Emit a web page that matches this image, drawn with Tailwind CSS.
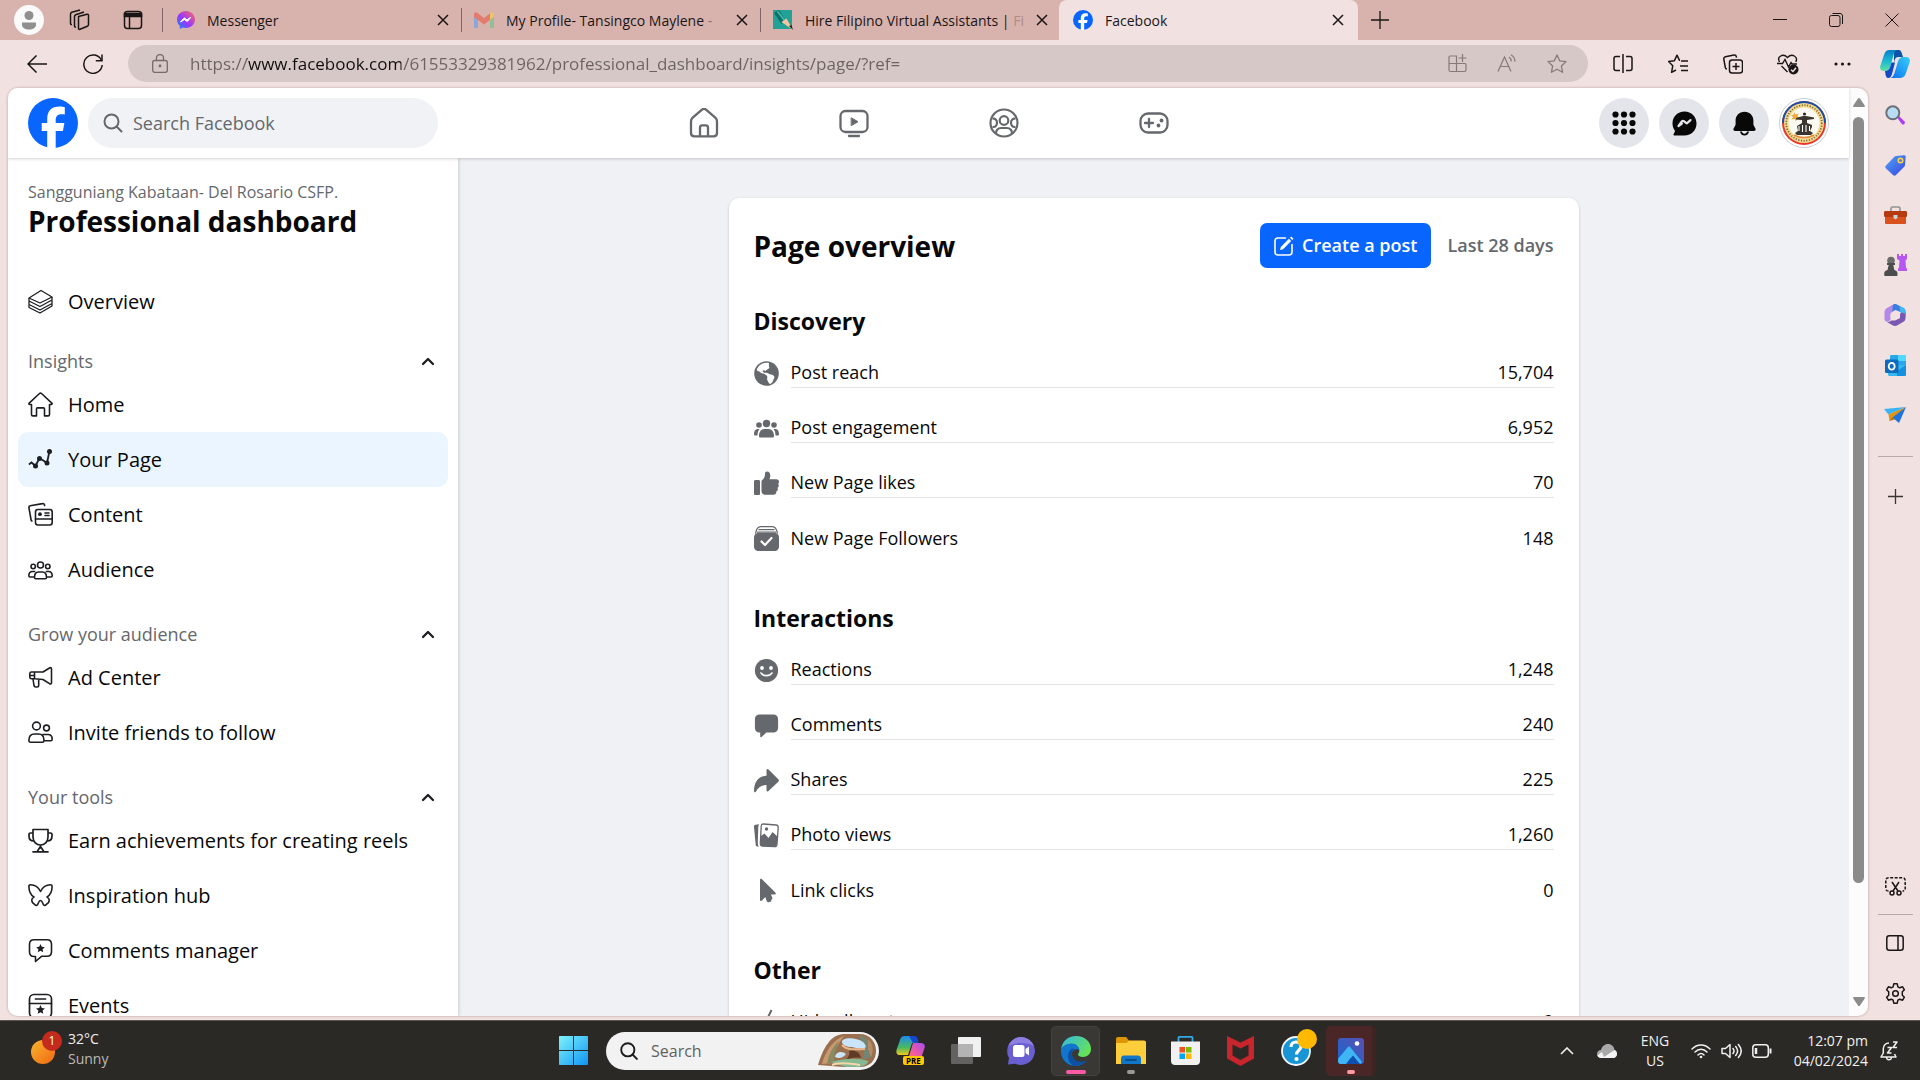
<!DOCTYPE html>
<html lang="en">
<head>
  <meta charset="UTF-8">
  <meta name="viewport" content="width=device-width, initial-scale=1.0">
  <title>Facebook</title>
  <script src="https://cdn.jsdelivr.net/npm/@tailwindcss/browser@4"></script>
</head>
<body class="h-screen flex flex-col overflow-hidden bg-[#f1e2e1] text-[#080809] font-['Open_Sans','Noto_Sans',sans-serif]">

  <!-- Tab strip -->
  <div class="h-10 shrink-0 flex items-center bg-[#d8b2ad] text-[14px] text-[#1b1616]">
    <button class="w-[54px] pl-1 flex justify-center" aria-label="Profile">
      <svg class="size-[30px]" viewBox="0 0 30 30"><circle cx="15" cy="15" r="15" fill="#fafafa"/><circle cx="15" cy="10.500" r="4.500" fill="#8f8f8f"/><path d="M8 17.500h14v2c0 3.500-3 5-7 5s-7-1.500-7-5z" fill="#8f8f8f"/></svg>
    </button>
    <button class="w-[50px] flex justify-center" aria-label="Workspaces">
      <svg class="size-[22px]" viewBox="0 0 22 22" fill="none" stroke="#1b1616" stroke-width="1.500" stroke-linejoin="round"><path d="M10.500 7.500 19 5.200c.8-.2 1.500.3 1.500 1.200v9c0 .9-.4 1.500-1.200 1.800L12 20.300c-.9.300-1.500-.2-1.500-1.100z"/><path d="M8 18c-1 .2-1.500-.3-1.500-1.200V7.500c0-.9.400-1.500 1.200-1.800L16 3"/><path d="M4 15.500c-1 .2-1.500-.3-1.500-1.200V5c0-.9.400-1.500 1.200-1.800L12 1"/></svg>
    </button>
    <button class="w-[58px] flex justify-center" aria-label="Tab actions">
      <svg class="size-5" viewBox="0 0 20 20" fill="none" stroke="#1b1616" stroke-width="1.500"><rect x="1.500" y="1.500" width="17" height="17" rx="3"/><path d="M1.500 3.500h17v3h-17z" fill="#1b1616"/><path d="M6.500 6v12"/></svg>
    </button>

    <div class="w-[299px] min-w-0 h-6 flex items-center gap-3 pl-[14px] pr-3 border-l border-[#7d6361]">
      <svg class="size-[18px] shrink-0" viewBox="0 0 18 18"><defs><linearGradient id="ms" x1="0" y1="1" x2="1" y2="0"><stop offset="0" stop-color="#0a8cff"/><stop offset=".45" stop-color="#9b36ff"/><stop offset="1" stop-color="#ff6b5a"/></linearGradient></defs><path d="M9 0C4 0 0 3.700 0 8.500 0 11 1 13.200 2.800 14.700V18l3-1.500c1 .3 2 .5 3.200.5 5 0 9-3.700 9-8.500S14 0 9 0z" fill="url(#ms)"/><path d="M3.500 11 7.200 6.800l2.700 2 3.900-2.500-3.500 4.300-2.900-2z" fill="#fff" stroke="#fff" stroke-linejoin="round"/></svg>
      <span class="flex-1 truncate">Messenger</span>
      <button aria-label="Close tab"><svg class="size-3" viewBox="0 0 12 12" stroke="#1b1616" stroke-width="1.500"><path d="m1 1 10 10M11 1 1 11"/></svg></button>
    </div>
    <div class="w-[299px] min-w-0 h-6 flex items-center gap-3 pl-3 pr-3 border-l border-[#7d6361]">
      <svg class="w-5 h-4 shrink-0" viewBox="0 0 20 16"><path d="M0 2v12.500c0 .8.600 1.500 1.500 1.500H4V6z" fill="#8ba6d8"/><path d="M20 2v12.500c0 .8-.6 1.500-1.500 1.500H16V6z" fill="#93bd94"/><path d="M16 2.500V8l4-3V2.500C20 .5 18-.5 16.500 1z" fill="#edc466"/><path d="M0 5V2.500C0 .5 2-.5 3.500 1L10 6l6-4.500V8l-6 4.500L4 8z" fill="#e37b6f"/></svg>
      <span class="flex-1 whitespace-nowrap">My Profile- Tansingco Maylene <span class="text-[#8c706d]">-</span></span>
      <button aria-label="Close tab"><svg class="size-3" viewBox="0 0 12 12" stroke="#1b1616" stroke-width="1.500"><path d="m1 1 10 10M11 1 1 11"/></svg></button>
    </div>
    <div class="w-[299px] min-w-0 h-6 flex items-center gap-3 pl-3 pr-3 border-l border-[#7d6361]">
      <svg class="size-5 shrink-0" viewBox="0 0 20 20"><path d="M0 0h19v19H0z" fill="#22a196"/><path d="m6 0 5.500 9L8.500 14 1 3z" fill="#0b6e68"/><path d="M4.500 1.500 12 11" stroke="#3cb5aa" stroke-width="2"/><path d="m8.500 12 5-3.500L20 20z" fill="#f4c49c"/><path d="m16 16 4 4-1.500-5z" fill="#222"/></svg>
      <span class="flex-1 whitespace-nowrap">Hire Filipino Virtual Assistants | <span class="text-[#b08b88]">Fi</span></span>
      <button aria-label="Close tab"><svg class="size-3" viewBox="0 0 12 12" stroke="#1b1616" stroke-width="1.500"><path d="m1 1 10 10M11 1 1 11"/></svg></button>
    </div>
    <div class="w-[299px] min-w-0 h-10 flex items-center gap-3 px-[14px] rounded-t-[8px] bg-[#f1e2e1]">
      <svg class="size-5 shrink-0" viewBox="0 0 50 50"><circle cx="25" cy="25" r="25" fill="#0866ff"/><path d="M19.500 50V32.500h-6V25h6v-4c0-9 4-13 12.500-13 1.800 0 4 .3 5 .6v7.200c-.8-.1-2-.1-3.200-.1-4.300 0-5.800 1.600-5.800 5.800V25h8.500l-1.500 7.500h-7V50z" fill="#fff"/></svg>
      <span class="flex-1 truncate">Facebook</span>
      <button aria-label="Close tab"><svg class="size-3" viewBox="0 0 12 12" stroke="#1b1616" stroke-width="1.500"><path d="m1 1 10 10M11 1 1 11"/></svg></button>
    </div>
    <button class="w-11 flex justify-center" aria-label="New tab"><svg class="size-[18px]" viewBox="0 0 18 18" stroke="#1b1616" stroke-width="1.300"><path d="M9 0v18M0 9h18"/></svg></button>
    <div class="ml-auto flex">
      <button class="w-14 flex justify-center" aria-label="Minimize"><svg class="size-[14px]" viewBox="0 0 14 14" stroke="#1b1616"><path d="M0 6.500h14"/></svg></button>
      <button class="w-14 flex justify-center" aria-label="Restore"><svg class="size-[14px]" viewBox="0 0 14 14" fill="none" stroke="#1b1616"><rect x=".5" y="2.500" width="10.500" height="11" rx="2"/><path d="M3.500.5H11c1.500 0 2.500 1 2.500 2.500v8"/></svg></button>
      <button class="w-14 flex justify-center" aria-label="Close"><svg class="size-[14px]" viewBox="0 0 14 14" stroke="#1b1616"><path d="m.5.5 13 13M13.500.5l-13 13"/></svg></button>
    </div>
  </div>

  <!-- Toolbar -->
  <div class="h-12 shrink-0 flex items-center pb-px">
    <button class="w-[74px] flex justify-center" aria-label="Back"><svg class="w-5 h-[18px]" viewBox="0 0 20 18" fill="none" stroke="#1b1616" stroke-width="1.500"><path d="M20 9H1M9.500.5 1 9l8.500 8.500"/></svg></button>
    <button class="w-[38px] mr-4 flex justify-center" aria-label="Refresh"><svg class="size-5" viewBox="0 0 20 20" fill="none" stroke="#1b1616" stroke-width="1.500"><path d="M18.500 6.500A9.200 9.200 0 1 0 19.200 11"/><path d="M19 .5v6.200h-6.200"/></svg></button>
    <div class="flex-1 min-w-0 h-[37px] flex items-center rounded-full bg-[#d6c8c7] pl-6 pr-[6px]">
      <svg class="w-4 h-[19px] shrink-0" viewBox="0 0 16 19" fill="none" stroke="#766b6a" stroke-width="1.300"><rect x=".7" y="6.500" width="14.600" height="11.800" rx="2"/><path d="M4.500 6.500V4a3.500 3.500 0 0 1 7 0v2.500"/><circle cx="8" cy="12" r=".8" fill="#766b6a"/></svg>
      <input type="text" aria-label="Address" value="https://www.facebook.com/61553329381962/professional_dashboard/insights/page/?ref=" class="ml-[22px] flex-1 min-w-0 outline-none text-[17px] text-transparent bg-clip-text bg-[linear-gradient(90deg,#6b6261_57px,#120e0e_57px,#120e0e_211px,#6b6261_211px)]">
      <button class="w-[50px] flex justify-center" aria-label="App available"><svg class="size-[19px]" viewBox="0 0 19 19" fill="none" stroke="#857a79" stroke-width="1.200"><path d="M2 2h6.500v15.500H2.500c-1 0-1.500-.5-1.500-1.500V3.500C1 2.500 1.500 2 2 2zM1 9.500h16c.5 0 1 .5 1 1V16c0 1-.5 1.500-1.500 1.500H8.500M14.500 0v8M10.500 4h8"/></svg></button>
      <button class="w-[50px] flex justify-center" aria-label="Read aloud"><svg class="size-5" viewBox="0 0 20 20" fill="none" stroke="#857a79" stroke-width="1.200"><path d="M1 17.500 7.500 3 14 17.500M3.500 12.500h8M12 3c1.500 1 2.200 2.500 2.200 4.500M14 .8c2.500 1.500 4 4 4 7"/></svg></button>
      <button class="w-[50px] flex justify-center" aria-label="Add to favorites"><svg class="size-5" viewBox="0 0 20 20" fill="none" stroke="#857a79" stroke-width="1.300" stroke-linejoin="round"><path d="m10 1 2.700 5.800 6.300.8-4.600 4.400 1.200 6.300L10 15.200l-5.600 3.100L5.600 12 1 7.600l6.300-.8z"/></svg></button>
    </div>
    <div class="ml-[7px] flex shrink-0">
      <button class="w-[55px] flex justify-center items-center" aria-label="Split screen"><svg class="w-5 h-[19px]" viewBox="0 0 20 19" fill="none" stroke="#1b1616" stroke-width="1.500"><path d="M7 2.500H3c-1.200 0-2 .8-2 2v10c0 1.200.8 2 2 2h4M13 2.500h4c1.200 0 2 .8 2 2v10c0 1.200-.8 2-2 2h-4M10 0v19"/></svg></button>
      <button class="w-[55px] flex justify-center items-center" aria-label="Favorites"><svg class="size-5" viewBox="0 0 20 20" fill="none" stroke="#1b1616" stroke-width="1.500" stroke-linejoin="round"><path d="M12 6.300h-.5L9 1.200 6.300 6.800l-5.800.7 4.300 4.200-1.200 6.600L8 16M13 7h7M12 12h8M13 16.500h7"/></svg></button>
      <button class="w-[55px] flex justify-center items-center" aria-label="Collections"><svg class="size-5" viewBox="0 0 20 20" fill="none" stroke="#1b1616" stroke-width="1.500"><rect x="6.500" y="6" width="13" height="13" rx="2.500"/><path d="M13 9v7M9.500 12.500h7M4 15c-1 0-1.500-.5-1.700-1.500L.8 5C.6 3.800 1.200 3 2.400 2.700L11 1c1.200-.2 2 .3 2.300 1.500l.2 1.200"/></svg></button>
      <button class="w-[55px] flex justify-center items-center" aria-label="Browser essentials"><svg class="size-[22px]" viewBox="0 0 22 22" fill="none" stroke="#1b1616" stroke-width="1.400"><path d="M2.500 9C-.5 3.500 6 0 10.500 4.500 15 0 21.500 3.500 18.800 9M0 10.500h5.500L8 6.500l3.500 7.500L14 9.500l1 1.500h5M4.500 13l6 6"/><circle cx="16.500" cy="16.500" r="5" fill="#1b1616" stroke="none"/><path d="m14 16.700 2 1.800 3-3.800" stroke="#f1e2e1"/></svg></button>
      <button class="w-[55px] flex justify-center items-center" aria-label="Settings and more"><svg class="w-[17px] h-1" viewBox="0 0 17 4" fill="#1b1616"><circle cx="2" cy="2" r="1.600"/><circle cx="8.500" cy="2" r="1.600"/><circle cx="15" cy="2" r="1.600"/></svg></button>
      <button class="w-[50px] flex justify-center items-center" aria-label="Copilot"><svg class="w-[30px] h-7" viewBox="0 0 30 28"><defs><linearGradient id="cp1" x1="0" y1="0" x2="0" y2="1"><stop offset="0" stop-color="#0b7fc8"/><stop offset=".5" stop-color="#19b6d4"/><stop offset="1" stop-color="#5de1a0"/></linearGradient><linearGradient id="cp2" x1="1" y1="0" x2="0" y2="1"><stop offset="0" stop-color="#35d0fb"/><stop offset="1" stop-color="#0c6ff0"/></linearGradient></defs><path d="M14 0h5c2.500 0 3 4 4 7h-5c-2.500 0-3.500 3-4 6z" fill="#0b55a8"/><path d="M23 7h3c3 0 4.500 2 3.700 5L26 23c-1 3.500-3 5-6.500 5H9c3 0 4.500-2 5.500-5l3-10c1-3.500 2.500-6 5.500-6z" fill="url(#cp2)"/><path d="M9.500 0h8c-2 0-3 1.500-4 5l-3 11c-1 3.500-2.500 5-5.500 5H4c-3 0-4.500-2-3.700-5L4 5C5 1.500 6.500 0 9.500 0z" fill="url(#cp1)"/><path d="M5 21c3 0 4.500-1.500 5.500-5l1-3.500h3.500L12.500 22c-1 4-2 6-4.500 6-2 0-2.500-3-3-7z" fill="#1247c8"/></svg></button>
    </div>
  </div>

  <div class="flex-1 min-h-0 flex">

    <!-- Page -->
    <div class="flex-1 min-w-0 ml-2 mb-1 flex rounded-[10px] overflow-hidden bg-[#fcfcfc] shadow-[0_0_3px_#b79c9a]">
      <div class="flex-1 min-w-0 flex flex-col bg-[#f0f1f5]">

        <header class="relative z-10 h-[70px] shrink-0 grid grid-cols-[1fr_auto_1fr] items-center px-5 bg-white shadow-[0_1px_3px_#0000002e]">
          <div class="flex items-center gap-[10px]">
            <a href="#" aria-label="Facebook"><svg class="size-[50px]" viewBox="0 0 50 50"><circle cx="25" cy="25" r="25" fill="#0866ff"/><path d="M19.200 50V33h-5.500v-8h5.500v-3.500c0-8.800 4-12.900 12.600-12.900 1.700 0 4 .3 5 .6v7.200c-.6-.1-1.500-.1-2.800-.1-4.500 0-6.300 1.700-6.300 6.100V25h8.700l-1.500 8h-7.200v17z" fill="#fff"/></svg></a>
            <label class="w-[350px] h-[50px] flex items-center gap-[10px] pl-[15px] rounded-full bg-[#f0f2f5]">
              <svg class="size-5 shrink-0" viewBox="0 0 20 20" fill="none" stroke="#65686c" stroke-width="2"><circle cx="8.500" cy="8.500" r="7"/><path d="m13.500 13.500 5 5" stroke-linecap="round"/></svg>
              <input type="search" aria-label="Search Facebook" placeholder="Search Facebook" class="w-full outline-none text-[18px] placeholder:text-[#65686c]">
            </label>
          </div>
          <nav class="flex">
            <a href="#" class="w-[150px] flex justify-center" aria-label="Home"><svg class="size-[30px]" viewBox="0 0 30 30" fill="none" stroke="#65686c" stroke-width="2.300" stroke-linejoin="round"><path d="M2 13.500c0-1.500.6-2.800 1.700-3.800l9-7.900c1.400-1.200 3.200-1.200 4.600 0l9 7.900c1.100 1 1.700 2.300 1.700 3.800V25c0 2-1.300 3.300-3.300 3.300H5.300C3.300 28.300 2 27 2 25z"/><path d="M11 28v-8.500c0-1.500.8-2.200 2.200-2.200h3.600c1.400 0 2.200.7 2.200 2.200V28"/></svg></a>
            <a href="#" class="w-[150px] flex justify-center" aria-label="Video"><svg class="size-[30px]" viewBox="0 0 30 30" fill="none" stroke="#65686c" stroke-width="2.300" stroke-linecap="round"><rect x="1.500" y="3" width="27" height="21" rx="5"/><path d="M10 28h10"/><path d="m12.500 10 6.500 3.700-6.500 3.800z" fill="#65686c" stroke-width="1" stroke-linejoin="round"/></svg></a>
            <a href="#" class="w-[150px] flex justify-center" aria-label="Groups"><svg class="size-[30px]" viewBox="0 0 30 30" fill="none" stroke="#65686c" stroke-width="2.200"><circle cx="15" cy="15" r="13.500"/><circle cx="15" cy="12.500" r="4.300"/><path d="M7 26c-.5-3.500 2-6 5-6h6c3 0 5.500 2.500 5 6M3.500 10.800c2.500-.8 4.500 1.200 4.500 4s-2 4.800-4.500 4M26.500 10.800c-2.500-.8-4.500 1.200-4.500 4s2 4.800 4.500 4"/></svg></a>
            <a href="#" class="w-[150px] flex justify-center" aria-label="Gaming"><svg class="size-[30px]" viewBox="0 0 30 30" fill="none" stroke="#65686c" stroke-width="2.300" stroke-linecap="round"><rect x="1.500" y="5.500" width="27" height="19" rx="7.500"/><path d="M10 11v8M6 15h8"/><circle cx="22.500" cy="12.500" r=".8" fill="#65686c"/><circle cx="19.500" cy="17.500" r=".8" fill="#65686c"/></svg></a>
          </nav>
          <div class="flex justify-end gap-[10px]">
            <button class="size-[50px] rounded-full bg-[#e4e5ea] flex items-center justify-center" aria-label="Menu"><svg class="size-6" viewBox="0 0 24 24" fill="#080809"><circle cx="3.500" cy="3.500" r="3.100"/><circle cx="12" cy="3.500" r="3.100"/><circle cx="20.500" cy="3.500" r="3.100"/><circle cx="3.500" cy="12" r="3.100"/><circle cx="12" cy="12" r="3.100"/><circle cx="20.500" cy="12" r="3.100"/><circle cx="3.500" cy="20.500" r="3.100"/><circle cx="12" cy="20.500" r="3.100"/><circle cx="20.500" cy="20.500" r="3.100"/></svg></button>
            <button class="size-[50px] rounded-full bg-[#e4e5ea] flex items-center justify-center" aria-label="Messenger"><svg class="size-[25px]" viewBox="0 0 25 25"><path d="M12.500.5C5.500.5.5 5.600.5 12.500c0 2.700.8 5.200 2.300 7.100.2.400.2.800 0 1.200l-1.300 2.500c-.3.600.1 1.200.8 1.200h10.200c7 0 12-5.100 12-12S19.500.5 12.500.5z" fill="#080809"/><path d="m6.500 15 3.300-4.500c.6-.7 1.400-.8 2-.3l2.500 2c.3.200.6.200.8-.1l3.400-3M6.500 15l3.400-2.500" fill="none" stroke="#e4e5ea" stroke-width="2.200" stroke-linecap="round" stroke-linejoin="round"/></svg></button>
            <button class="size-[50px] rounded-full bg-[#e4e5ea] flex items-center justify-center" aria-label="Notifications"><svg class="size-[25px]" viewBox="0 0 25 25" fill="#080809"><path d="M12.500.8C7.300.8 3.600 4.800 3.600 9.500v3.600c0 .6-.2 1.200-.6 1.800l-1.300 2.300c-.9 1.500 0 2.700 1.600 2.700h18.400c1.600 0 2.500-1.200 1.600-2.700L22 14.900c-.4-.6-.6-1.200-.6-1.800V9.500c0-4.700-3.700-8.700-8.900-8.700z"/><path d="M8 20.500h2c.2 1.300 1.200 2.200 2.500 2.200s2.300-.9 2.500-2.200h2c-.2 2.300-2.200 4.100-4.500 4.100S8.200 22.800 8 20.500z"/></svg></button>
            <button class="size-[50px]" aria-label="Account"><svg class="size-[50px]" viewBox="0 0 50 50"><circle cx="25" cy="25" r="24.500" fill="#fff" stroke="#c9ccd1"/><circle cx="25" cy="25" r="22" fill="#e6392c"/><path d="M3 25a22 22 0 0 1 44 0z" fill="#1c4ea3"/><circle cx="25" cy="25" r="20" fill="#f6d98a"/><circle cx="25" cy="25" r="17.800" fill="none" stroke="#7a6a45" stroke-width="1.800" stroke-dasharray="1.200 1.500"/><circle cx="25" cy="25" r="15.500" fill="#fbfaf2"/><path d="m15 14 1.500 2.500 3-1-1 3 2.500 1.500-3 .5-1 3-1.500-2.500-3 .5 1.500-2.500-2-2 2.500-.3z" fill="#f2a93b"/><circle cx="25.500" cy="16" r="1.600" fill="#2c2824"/><path d="m17 20 7-2h3l8 1.500v1.500l-7 1v3l5 2v2l-2 4 3 2-2 2H18l-2-2 3-2-1-5 5-3v-3l-6-.5z" fill="#3b352f"/><path d="M20 28v5M23.500 27v7M27 27v7M30.500 28v5" stroke="#fff" stroke-width="1.100"/><path d="M15 37c6.500 3.500 13.500 3.500 20 0" fill="none" stroke="#e08a3a" stroke-width="1.800"/></svg></button>
          </div>
        </header>

        <div class="flex-1 min-h-0 flex">

          <!-- Left menu -->
          <aside class="w-[450px] shrink-0 overflow-hidden bg-white px-[10px] pt-6 shadow-[1px_0_3px_#00000026] text-[20px] font-medium">
            <p class="px-[10px] text-[16px] leading-5 font-normal text-[#65686c]">Sangguniang Kabataan- Del Rosario CSFP.</p>
            <h1 class="px-[10px] mb-[34px] text-[28px] leading-[38px] font-bold">Professional dashboard</h1>

            <a href="#" class="h-[55px] px-[10px] flex items-center gap-[15px]">
              <svg class="size-[25px]" viewBox="0 0 25 25" fill="none" stroke="#1c1e21" stroke-width="1.300" stroke-linejoin="round"><path d="M13 1.500 24 8l-12 6L1 9z"/><path d="M24 8v3l-12 6.500L1 12V9M24 11.500v3L12 21 1 15.500V12.500M24 15v2L12 24 1 18.500V16"/></svg>
              Overview
            </a>

            <button class="mt-4 w-full h-8 pl-[10px] pr-[13px] flex items-center justify-between text-[18px] text-[#65686c]">Insights
              <svg class="w-[14px] h-[9px]" viewBox="0 0 14 9" fill="none" stroke="#1c1e21" stroke-width="2.300" stroke-linecap="round" stroke-linejoin="round"><path d="m2 7 5-5 5 5"/></svg>
            </button>
            <a href="#" class="h-[55px] px-[10px] flex items-center gap-[15px]">
              <svg class="size-[25px]" viewBox="0 0 25 25" fill="none" stroke="#1c1e21" stroke-width="1.600" stroke-linejoin="round" stroke-linecap="round"><path d="M3.500 12.500H1.800c-.9 0-1.200-.8-.6-1.400L11.500 1.500c.6-.5 1.400-.5 2 0l10.300 9.600c.6.600.3 1.400-.6 1.400h-1.700v10c0 .9-.5 1.400-1.400 1.400h-3.600v-7c0-.6-.4-1-1-1H9.500c-.6 0-1 .4-1 1v7H4.900c-.9 0-1.400-.5-1.400-1.400z"/></svg>
              Home
            </a>
            <a href="#" class="h-[55px] px-[10px] flex items-center gap-[15px] rounded-[10px] bg-[#ebf5ff]">
              <svg class="size-[25px]" viewBox="0 0 25 25" fill="none" stroke="#1c1e21" stroke-width="1.800" stroke-linecap="round"><path d="m1.500 17 2-1.500 4 3.500 4-8 7.500 5 2.500-12"/><g fill="#1c1e21" stroke="none"><circle cx="7.500" cy="19" r="2.500"/><circle cx="11.500" cy="11.500" r="2.500"/><circle cx="19" cy="16" r="2.500"/><circle cx="21.500" cy="4.500" r="2.500"/></g></svg>
              Your Page
            </a>
            <a href="#" class="h-[55px] px-[10px] flex items-center gap-[15px]">
              <svg class="size-[25px]" viewBox="0 0 25 25" fill="none" stroke="#1c1e21" stroke-width="1.600" stroke-linecap="round"><rect x="7.500" y="7.500" width="16.700" height="15.500" rx="2.500"/><path d="M7.500 17h16.500M17 11h4M17 13.500h4M4 19c-.5 0-.8-.4-.9-1L.9 5.500c-.1-.9.400-1.600 1.300-1.800L14.500 1.600c1-.2 1.700.3 1.900 1.200l.2.700"/><circle cx="12" cy="12.200" r="1.900" fill="#1c1e21" stroke="none"/></svg>
              Content
            </a>
            <a href="#" class="h-[55px] px-[10px] flex items-center gap-[15px]">
              <svg class="size-[25px]" viewBox="0 0 25 25" fill="none" stroke="#1c1e21" stroke-width="1.600" stroke-linejoin="round"><circle cx="12.500" cy="8" r="3"/><circle cx="5.200" cy="9.500" r="2.200"/><circle cx="19.800" cy="9.500" r="2.200"/><path d="M6.500 20.500c0-3.500 1.500-5.500 4-5.500h4c2.500 0 4 2 4 5.500 0 .8-.5 1.300-1.300 1.300H7.800c-.8 0-1.300-.5-1.300-1.300zM6.500 20H2c-.7 0-1.200-.4-1.200-1.200 0-2.700 1.200-4.300 3.500-4.300h3M18.500 20H23c.7 0 1.200-.4 1.200-1.200 0-2.700-1.200-4.300-3.500-4.300h-3"/></svg>
              Audience
            </a>

            <button class="mt-[21px] w-full h-8 pl-[10px] pr-[13px] flex items-center justify-between text-[18px] text-[#65686c]">Grow your audience
              <svg class="w-[14px] h-[9px]" viewBox="0 0 14 9" fill="none" stroke="#1c1e21" stroke-width="2.300" stroke-linecap="round" stroke-linejoin="round"><path d="m2 7 5-5 5 5"/></svg>
            </button>
            <a href="#" class="h-[55px] px-[10px] flex items-center gap-[15px]">
              <svg class="size-[25px]" viewBox="0 0 25 25" fill="none" stroke="#1c1e21" stroke-width="1.600" stroke-linejoin="round"><path d="M6.500 7H3.500C2.300 7 1.800 7.500 1.800 8.500v3.800c0 1 .5 1.500 1.700 1.500h3L15 14.500l6.500 4.200c1.200.7 2 .2 2-1V4c0-1.200-.8-1.700-2-1L15 7zM6.500 7v6.800M1.500 10.500h5M5 14l1 6.500c.2 1 .7 1.500 1.700 1.500H9c1.200 0 1.700-.6 1.700-1.700V14"/></svg>
              Ad Center
            </a>
            <a href="#" class="h-[55px] px-[10px] flex items-center gap-[15px]">
              <svg class="size-[25px]" viewBox="0 0 25 25" fill="none" stroke="#1c1e21" stroke-width="1.600" stroke-linejoin="round"><circle cx="8.500" cy="6" r="3.900"/><circle cx="18.500" cy="8" r="2.900"/><path d="M.9 20.500c0-4 2-6.500 5.600-6.500h4c3.500 0 5.500 2.500 5.500 6.500 0 1-.6 1.700-1.600 1.700H2.500c-1 0-1.600-.7-1.600-1.700zM14.500 14.500h5.500c2.800 0 4.200 2 4.200 4.700 0 1-.5 1.500-1.400 1.500H16"/></svg>
              Invite friends to follow
            </a>

            <button class="mt-[21px] w-full h-8 pl-[10px] pr-[13px] flex items-center justify-between text-[18px] text-[#65686c]">Your tools
              <svg class="w-[14px] h-[9px]" viewBox="0 0 14 9" fill="none" stroke="#1c1e21" stroke-width="2.300" stroke-linecap="round" stroke-linejoin="round"><path d="m2 7 5-5 5 5"/></svg>
            </button>
            <a href="#" class="h-[55px] px-[10px] flex items-center gap-[15px]">
              <svg class="size-[25px]" viewBox="0 0 25 25" fill="none" stroke="#1c1e21" stroke-width="1.700" stroke-linejoin="round"><path d="M5 1.500h15V9c0 5-3.500 8-7.500 8S5 14 5 9zM5 5H2.500C1.500 5 1 5.500 1 6.300V8c0 3 2 5 4.800 5M20 5h2.500c1 0 1.500.5 1.500 1.300V8c0 3-2 5-4.800 5M12.500 17v3M12.500 18.500l-3 4.500M12.500 18.500l3 4.500M5 23.800h15" stroke-linecap="round"/></svg>
              Earn achievements for creating reels
            </a>
            <a href="#" class="h-[55px] px-[10px] flex items-center gap-[15px]">
              <svg class="size-[25px]" viewBox="0 0 25 25" fill="none" stroke="#1c1e21" stroke-width="1.600" stroke-linejoin="round"><path d="M12.500 8.500C10 3.500 5.500 1.800 2.500 1.800 1.400 1.800.9 2.300.9 3.300.9 8.500 2.500 12 6 14c-2.300 1-2.800 3.500-1.500 5.500.8 1.200 2 1.500 2.500 2.300.6.800 1.800.8 2.500 0 .8-1 1.300-4.300 3-4.300s2.200 3.300 3 4.300c.7.800 1.900.8 2.500 0 .5-.8 1.700-1.100 2.500-2.300 1.300-2 .8-4.500-1.500-5.500 3.500-2 5.100-5.500 5.100-10.700 0-1-.5-1.500-1.600-1.500-3 0-7.500 1.700-10 6.700z"/></svg>
              Inspiration hub
            </a>
            <a href="#" class="h-[55px] px-[10px] flex items-center gap-[15px]">
              <svg class="size-[25px]" viewBox="0 0 25 25" fill="none" stroke="#1c1e21" stroke-width="1.600" stroke-linejoin="round"><path d="M6 1.800h13c3 0 4.500 1.500 4.500 4.500v7.500c0 3-1.500 4.500-4.500 4.500h-5.500L7.500 23.500v-5H6c-3 0-4.500-1.500-4.500-4.700V6.300c0-3 1.500-4.500 4.500-4.500z"/><path d="m12.500 6 1.300 2.800 3 .4-2.200 2.100.6 3-2.700-1.500-2.700 1.500.6-3-2.200-2.100 3-.4z" fill="#1c1e21" stroke="none"/></svg>
              Comments manager
            </a>
            <a href="#" class="h-[55px] px-[10px] flex items-center gap-[15px]">
              <svg class="size-[25px]" viewBox="0 0 25 25" fill="none" stroke="#1c1e21" stroke-width="1.700" stroke-linecap="round"><rect x="1.500" y="1.500" width="22" height="23" rx="4.500"/><path d="M1.500 10.500h22M7.500 6h10"/><path d="m12.500 12 1.300 3 3.200.4-2.400 2.200.7 3.200-2.800-1.600-2.800 1.600.7-3.200L8 15.400l3.200-.4z" fill="#1c1e21" stroke="none"/></svg>
              Events
            </a>
          </aside>

          <!-- Page overview card -->
          <main class="flex-1 min-w-0 overflow-hidden pt-10">
            <section class="max-w-[850px] h-[1000px] mx-auto p-[25px] bg-white rounded-[10px] shadow-[0_1px_3px_#00000033]">
              <div class="flex items-center">
                <h2 class="flex-1 text-[28px] leading-9 font-bold">Page overview</h2>
                <button class="h-[45px] px-[14px] flex items-center gap-2 rounded-[7px] bg-[#0866ff] text-white text-[18px] font-semibold">
                  <svg class="size-5" viewBox="0 0 20 20" fill="none" stroke="#fff" stroke-width="1.600" stroke-linecap="round"><path d="M11.500 2H4C2 2 1 3 1 5v11c0 2 1 3 3 3h11c2 0 3-1 3-3V8.500"/><path d="m6 14 .8-3L15 2.800 17.200 5 9 13.200z" fill="#fff" stroke="none"/><path d="m17.300.5 2.200 2.200-1.200 1.300L16 1.800z" fill="#fff" stroke="none"/></svg>
                  Create a post
                </button>
                <span class="ml-4 text-[18px] font-semibold text-[#65686c]">Last 28 days</span>
              </div>

              <h3 class="mt-[38px] text-[23px] leading-[30px] font-bold">Discovery</h3>
              <ul class="mt-[22px] space-y-[25px] text-[18px] font-medium">
                <li class="flex items-center gap-3">
                  <svg class="size-[25px]" viewBox="0 0 25 25"><circle cx="12.500" cy="12.500" r="12.300" fill="#65686c"/><path d="M15 2c-2-.6-5-.3-7.500 1C5 4.500 3 7 2.700 9c1 1.500 2.500 1 3.300 2 1 1.300 2.500 1.500 4 1.500.8 1.500 2.300 1.300 3 2.500.8 1.500-.5 3 .5 4.500s.8 2.500 2.500 3.500c2-1 3-2.500 3.300-4.300 1-1.200 1.500-2.500.7-3.700-1.500-2-4-1-5.500-2.500-1-1-3-1-4-.5-.5-1-1.800-.8-2-2 .5-1 2-.8 3 0 1-2 3.500-1.500 4-3.500C14.500 5.500 15 4 15 2z" fill="#fff"/></svg>
                  <div class="flex-1 h-[30px] flex items-center justify-between border-b border-[#e2e4e8]"><span>Post reach</span><span class="font-normal">15,704</span></div>
                </li>
                <li class="flex items-center gap-3">
                  <svg class="size-[25px]" viewBox="0 0 25 25" fill="#65686c"><circle cx="12.500" cy="7.500" r="3.700"/><circle cx="5" cy="9" r="2.800"/><circle cx="20" cy="9" r="2.800"/><path d="M5 20c0-4 2-7 5.500-7h4c3.500 0 5.500 3 5.500 7 0 1-.6 1.500-1.500 1.500h-12C5.600 21.500 5 21 5 20zM0 18c0-3 1.300-4.500 3.300-5h2.200C4 15 3.500 17 3.500 19.500H1.300C.5 19.500 0 19 0 18zM25 18c0-3-1.300-4.500-3.300-5h-2.200c1.500 2 2 4 2 6.500h2.200c.8 0 1.300-.5 1.300-1.500z"/></svg>
                  <div class="flex-1 h-[30px] flex items-center justify-between border-b border-[#e2e4e8]"><span>Post engagement</span><span class="font-normal">6,952</span></div>
                </li>
                <li class="flex items-center gap-3">
                  <svg class="size-[25px]" viewBox="0 0 25 25" fill="#65686c"><path d="M1.500 9h3C5.500 9 6 9.500 6 10.500v12c0 1-.5 1.500-1.500 1.500h-3C.5 24 0 23.500 0 22.500v-12C0 9.500.5 9 1.500 9zM7.500 11c0-1 .3-1.600 1-2.200C10.500 7 11 5 11 2.500 11 1.200 11.800.5 13 .5c2.300 0 3.300 2 3.300 4 0 1.500-.3 2.500-.8 3.700h6.800c1.700 0 2.700 1 2.700 2.500 0 1-.3 1.500-.8 2 .5.600.6 1.200.6 1.800 0 1.200-.6 2-1.300 2.500.3.500.4 1 .3 1.500-.1 1-.8 1.700-1.600 2 .4 2-.7 3.200-2.700 3.200h-8c-2.500 0-4-1.500-4-4z"/></svg>
                  <div class="flex-1 h-[30px] flex items-center justify-between border-b border-[#e2e4e8]"><span>New Page likes</span><span class="font-normal">70</span></div>
                </li>
                <li class="flex items-center gap-3">
                  <svg class="size-[25px]" viewBox="0 0 25 25"><path d="M5 7h15c3.500 0 5 1.500 5 5v8c0 3.500-1.500 5-5 5H5c-3.500 0-5-1.500-5-5v-8c0-3.500 1.500-5 5-5z" fill="#65686c"/><path d="M1.500 7.500C2.500 2.500 4.500.7 6.500.7h12c2 0 4 1.800 5 6.800M4.500 3.700h16M3 6.200h19" fill="none" stroke="#65686c" stroke-width="1.300"/><path d="m7.500 15.500 3.500 3.500 6.500-7" fill="none" stroke="#fff" stroke-width="2.200" stroke-linecap="round" stroke-linejoin="round"/></svg>
                  <div class="flex-1 h-[30px] flex items-center justify-between"><span>New Page Followers</span><span class="font-normal">148</span></div>
                </li>
              </ul>

              <h3 class="mt-[50px] text-[23px] leading-[30px] font-bold">Interactions</h3>
              <ul class="mt-[22px] space-y-[25px] text-[18px] font-medium">
                <li class="flex items-center gap-3">
                  <svg class="size-[25px]" viewBox="0 0 25 25"><circle cx="12.500" cy="12.500" r="11.600" fill="#65686c"/><circle cx="8" cy="10" r="1.900" fill="#fff"/><circle cx="17" cy="10" r="1.900" fill="#fff"/><path d="M7 15c2.500 3.500 8.500 3.500 11 0" fill="none" stroke="#fff" stroke-width="1.600" stroke-linecap="round"/></svg>
                  <div class="flex-1 h-[30px] flex items-center justify-between border-b border-[#e2e4e8]"><span>Reactions</span><span class="font-normal">1,248</span></div>
                </li>
                <li class="flex items-center gap-3">
                  <svg class="size-[25px]" viewBox="0 0 25 25" fill="#65686c"><path d="M6.500 1.500h12c4 0 5.600 1.700 5.600 5.500v7c0 3.800-1.600 5.500-5.600 5.500h-6L7.500 24c-.7.600-1.300.3-1.300-.5v-4C2.500 19.500.9 17.800.9 14V7c0-3.800 1.600-5.500 5.600-5.500z"/></svg>
                  <div class="flex-1 h-[30px] flex items-center justify-between border-b border-[#e2e4e8]"><span>Comments</span><span class="font-normal">240</span></div>
                </li>
                <li class="flex items-center gap-3">
                  <svg class="size-[25px]" viewBox="0 0 25 25" fill="#65686c"><path d="M12.500 2.500c0-1.500 1-2 2-1l9.800 9.800c.8.800.8 1.600 0 2.400l-9.800 9.400c-1 1-2 .5-2-1v-5c-5 0-8 2-10.500 6.500-.6 1-2 .8-2-.6C0 14 4.500 8 12.500 7.800z"/></svg>
                  <div class="flex-1 h-[30px] flex items-center justify-between border-b border-[#e2e4e8]"><span>Shares</span><span class="font-normal">225</span></div>
                </li>
                <li class="flex items-center gap-3">
                  <svg class="size-[25px]" viewBox="0 0 25 25" fill="#65686c"><path d="M1.500 1.800 5 1.300C4.300 3 4 5 4.200 7L3.800 19c0 2 .3 3.500 1 4.800l-1.500-.2c-1-.2-1.500-.8-1.600-1.800L0 4C-.1 2.800.4 2 1.500 1.800z"/><path d="m9.500 1 12.500 1c1.600.1 2.300 1 2.200 2.500L23 21.500c-.1 1.600-1 2.300-2.500 2.200L8.500 23c-1.600-.1-2.300-1-2.200-2.500L7.200 3.200C7.300 1.600 8 .9 9.500 1z" fill="none" stroke="#65686c" stroke-width="1.300"/><path d="m7 13 3.500-2.500 4 4.500 4-6 5 4.500-.7 8c-.1 1.500-1 2-2.300 2L8.500 23c-1.500-.1-2.200-.8-2.100-2.300z"/><circle cx="12.500" cy="6" r="1.700"/></svg>
                  <div class="flex-1 h-[30px] flex items-center justify-between border-b border-[#e2e4e8]"><span>Photo views</span><span class="font-normal">1,260</span></div>
                </li>
                <li class="flex items-center gap-3">
                  <svg class="size-[25px]" viewBox="0 0 25 25" fill="#65686c"><path d="M6 2c0-1.300 1-1.700 2-.8l13.300 13.300c.9.900.5 2-.8 2H17l1.300 3.300c.3.800 0 1.500-.8 1.800l-.5 2c-1 .5-2.500 1-3.300.5-.7-.3-.9-.9-1.200-1.600L11.300 19 8 22.500c-.9.900-2 .5-2-.8z"/></svg>
                  <div class="flex-1 h-[30px] flex items-center justify-between"><span>Link clicks</span><span class="font-normal">0</span></div>
                </li>
              </ul>

              <h3 class="mt-[50px] text-[23px] leading-[30px] font-bold">Other</h3>
              <ul class="mt-[21px] text-[18px] font-medium">
                <li class="flex items-center gap-3">
                  <svg class="size-[25px]" viewBox="0 0 25 25" fill="none" stroke="#65686c" stroke-width="2"><path d="m17.500 1-11 23M5 12h15v8H5z"/></svg>
                  <div class="flex-1 h-[30px] flex items-center justify-between"><span>Hide all posts</span><span class="font-normal">0</span></div>
                </li>
              </ul>
            </section>
          </main>
        </div>
      </div>

      <!-- Scrollbar -->
      <div class="w-[19px] shrink-0 flex flex-col items-center justify-between pt-[10px] pb-[10px]">
        <svg class="w-3 h-[9px] shrink-0" viewBox="0 0 12 9" fill="#8b8b8b"><path d="M6 0c.5 0 .8.300 1 .6l4.700 7c.4.700.1 1.400-.8 1.400H1.100C.2 9-.1 8.300.3 7.600l4.700-7C5.200.3 5.500 0 6 0z"/></svg>
        <div class="flex-1 w-full pt-[10px] flex justify-center"><div class="w-[11px] h-[87%] rounded-full bg-[#8b8b8b]"></div></div>
        <svg class="w-3 h-[9px] shrink-0" viewBox="0 0 12 9" fill="#8b8b8b"><path d="M6 9c.5 0 .8-.3 1-.6l4.700-7C12.100.7 11.800 0 10.900 0H1.100C.2 0-.1.700.3 1.400l4.700 7c.2.300.5.600 1 .6z"/></svg>
      </div>
    </div>

    <!-- Browser side bar -->
    <div class="w-[52px] shrink-0 pt-[2px] pl-[2px] flex flex-col items-center">
      <button class="h-[50px]" aria-label="Search"><svg class="size-5" viewBox="0 0 20 20"><path d="m12 12.500 2-1.500 5.500 5.500c.8.800.5 2-.3 2.700-.8.600-1.700.5-2.400-.3z" fill="#b03cf5"/><circle cx="7.800" cy="7.800" r="6.500" fill="#b9dcf5" stroke="#6c7076" stroke-width="2"/></svg></button>
      <button class="h-[50px]" aria-label="Shopping"><svg class="size-[21px]" viewBox="0 0 21 21"><defs><linearGradient id="tag" x1="0" y1="0" x2="1" y2="1"><stop offset="0" stop-color="#4fa4f7"/><stop offset="1" stop-color="#3a44e0"/></linearGradient></defs><path d="m11 1 8-.8c1 0 1.700.5 1.700 1.500L20 10c0 .8-.3 1.200-.8 1.800L11 20c-1 1-2 1-3 0L1 13.500c-1-1-1-2 0-3L9.300 1.800c.5-.5 1-.7 1.700-.8z" fill="url(#tag)"/><circle cx="15.500" cy="5.500" r="2.300" fill="#5b7cf0" stroke="#ffd53d" stroke-width="1.500"/></svg></button>
      <button class="h-[50px]" aria-label="Tools"><svg class="w-[23px] h-[18px]" viewBox="0 0 23 18"><path d="M7 5V2.500C7 1.500 7.500 1 8.500 1h6c1 0 1.500.5 1.500 1.500V5" fill="none" stroke="#929292" stroke-width="1.600"/><path d="M1 8h21v8.500c0 1-.5 1.500-1.500 1.500h-18C1.500 18 1 17.500 1 16.500z" fill="#d9511c"/><path d="M1.500 5h20c1 0 1.500.5 1.500 1.500v3c0 1-.5 1.500-1.500 1.500h-20C.5 11 0 10.500 0 9.500v-3C0 5.500.5 5 1.500 5z" fill="#b43a10"/><path d="M9.500 9h4v3l-2 1.500-2-1.500z" fill="#c4d4da"/></svg></button>
      <button class="h-[50px]" aria-label="Games"><svg class="w-[23px] h-[22px]" viewBox="0 0 23 22"><path d="M13 0h2v2h2V0h2v2h2V0h2v5l-1.500 1.500.5 7c.7.500 1 1 1 2V17h-9v-1.500c0-1 .5-1.500 1-2l.5-7L13 5z" fill="#b657f2"/><circle cx="7" cy="6.500" r="3.800" fill="#6b6b6b"/><path d="M3 9h8v2H9.300l1 5c2 .5 3.200 1.500 3.200 3.500v1.200c0 .8-.5 1.300-1.300 1.300H1.500C.6 22 .2 21.500.2 20.700v-1.200c0-2 1.200-3 3.300-3.500l1.200-5H3z" fill="#4d4d4d"/></svg></button>
      <button class="h-[50px]" aria-label="Microsoft 365"><svg class="size-[22px]" viewBox="0 0 22 22"><path d="M10 0 3 4C1.500 5 .5 6 .5 8v7c0 2 2 3.500 4 2.500 2-1 2-2.500 2-4V10l3-3V2z" fill="#b488e8"/><path d="M10 0h2l7.500 4c1.500 1 2 2.500 2 4v5l-5-5-5-2-3 2V4c0-1.500.5-3 1.500-4z" fill="#3b7de0"/><path d="M21.500 8v6c0 2-.8 3-2.500 4l-6 3.500c-1.500.8-3 .5-4.500-.3L3 18c3 .5 4-1.500 4-1.500l4 0 5-2.500V9.500z" fill="#7a57b0"/><path d="M16 7.500 21.500 10V7c0-1.500-1-2.500-2-3l-4-2z" fill="#41b9ee"/><path d="m11 6.500 4.500 2.600v4.800L11 16l-4.300-2.300V9z" fill="#f1e2e1"/></svg></button>
      <button class="h-[50px]" aria-label="Outlook"><svg class="size-[21px]" viewBox="0 0 21 21"><path d="M5 1.500C5 .6 5.500 0 6.500 0h13c.9 0 1.500.6 1.500 1.500V10H5z" fill="#28a8ea"/><path d="M13 0h6.500c.9 0 1.500.6 1.500 1.500V6h-8z" fill="#50d9ff"/><path d="M3 10h18v9.500c0 .9-.6 1.500-1.500 1.500h-15c-.9 0-1.500-.6-1.500-1.500z" fill="#35b8f1"/><path d="m21 10-9 6v5h7.500c.9 0 1.500-.6 1.500-1.500z" fill="#1490df"/><rect y="4.500" width="13.500" height="13.500" rx="1.500" fill="#0f6cbd"/><ellipse cx="6.700" cy="11.200" rx="3" ry="3.400" fill="none" stroke="#fff" stroke-width="1.800"/></svg></button>
      <button class="h-[50px]" aria-label="Drop"><svg class="w-[22px] h-4" viewBox="0 0 22 16"><path d="M0 2 22 0 4.500 7.500z" fill="#39b3f3"/><path d="M4.500 7.500 22 0 5.500 14z" fill="#e2930f"/><path d="M22 0 15 16 8.500 10.500z" fill="#1b73e0"/><path d="m5.500 14 3-3.500 2.500 1.800z" fill="#b46a05"/></svg></button>
      <div class="w-[35px] mt-4 h-px shrink-0 bg-[#b9a9a8]"></div>
      <button class="h-[50px] mt-[14px]" aria-label="Customize"><svg class="size-[15px]" viewBox="0 0 15 15" stroke="#3a3433" stroke-width="1.300"><path d="M7.500 0v15M0 7.500h15"/></svg></button>
      <button class="h-[50px] mt-auto" aria-label="Screenshot"><svg class="w-[21px] h-[19px]" viewBox="0 0 21 19" fill="none" stroke="#1b1616" stroke-width="1.500"><path d="M3.500 14C1.500 14 .8 13 .8 11.500V3.500C.8 1.800 1.800.8 3.500.8h14c1.700 0 2.700 1 2.700 2.700v8c0 1.500-1 2.500-2.700 2.500" stroke-dasharray="3 1.500"/><path d="m7 5 6 9M14 5l-6 9"/><circle cx="7" cy="16" r="2"/><circle cx="14" cy="16" r="2"/></svg></button>
      <div class="w-[35px] my-[3px] h-px shrink-0 bg-[#b9a9a8]"></div>
      <button class="h-[50px]" aria-label="Toggle sidebar"><svg class="w-[18px] h-4" viewBox="0 0 18 16" fill="none" stroke="#1b1616" stroke-width="1.500"><rect x=".8" y=".8" width="16.400" height="14.400" rx="2.500"/><path d="M12 1v14"/></svg></button>
      <button class="h-[50px] mb-[2px]" aria-label="Settings"><svg class="size-[21px]" viewBox="0 0 21 21" fill="none" stroke="#1b1616" stroke-width="1.500" stroke-linejoin="round"><path d="M8.800.8h3.400l.7 3 1.800 1 2.900-1 1.800 3-2.100 2v3.400l2.100 2-1.800 3-2.900-1-1.800 1-.7 3H8.800l-.7-3-1.800-1-2.900 1-1.800-3 2.100-2V8.800l-2.100-2 1.800-3 2.900 1 1.800-1z"/><circle cx="10.500" cy="10.500" r="2.800"/></svg></button>
    </div>
  </div>

  <!-- Taskbar -->
  <div class="h-[60px] shrink-0 grid grid-cols-[1fr_auto_1fr] items-center bg-[#2a2926] border-t border-[#5c5552] text-[#f2f0ee] text-[14px] leading-5">
    <div class="pl-[31px] pb-1 flex items-center gap-[7px]">
      <div class="relative size-[30px]">
        <div class="absolute left-0 bottom-0 size-6 rounded-full bg-linear-to-br from-[#f5b52f] to-[#f0650f]"></div>
        <span class="absolute -right-px -top-[3px] size-5 rounded-full bg-[#c42b1c] text-center text-[12px] text-white">1</span>
      </div>
      <div><p>32°C</p><p class="text-[#bcb9b6]">Sunny</p></div>
    </div>

    <div class="flex items-center pl-1">
      <button class="w-[55px] flex justify-center" aria-label="Start"><svg class="size-[29px]" viewBox="0 0 29 29"><defs><linearGradient id="win" gradientUnits="userSpaceOnUse" x1="0" y1="0" x2="29" y2="29"><stop offset="0" stop-color="#7df4fc"/><stop offset="1" stop-color="#0f94f5"/></linearGradient></defs><path d="M1 0h13v14H0V1c0-.6.400-1 1-1zM15 0h13c.6 0 1 .4 1 1v13H15zM0 15h14v14H1c-.6 0-1-.4-1-1zM15 15h14v13c0 .6-.4 1-1 1H15z" fill="url(#win)"/></svg></button>
      <label class="ml-[5px] mr-1 w-[273px] h-[38px] flex items-center rounded-full bg-[#f3f2f2] pl-[14px] pr-[3px]">
        <svg class="size-[18px] shrink-0" viewBox="0 0 18 18" fill="none" stroke="#1c1c1c" stroke-width="1.900"><circle cx="7.800" cy="7.800" r="6.600"/><path d="m12.500 12.500 5 5"/></svg>
        <input type="search" aria-label="Search" placeholder="Search" class="ml-[13px] w-full min-w-0 outline-none text-[16px] text-black placeholder:text-[#616161]">
        <svg class="w-[58px] h-[34px] shrink-0" viewBox="0 0 58 34"><path d="M0 31C5 14 13 0 26 0h16c10 0 16 8 16 17s-6 16-16 16H26z" fill="#9a6f50"/><path d="M4 30C8 15 17 5 26 2c-6 8-11 16-12 27z" fill="#c99a72"/><path d="M9 29c2-9 6-17 12-22-3 7-5 14-5 22z" fill="#8a8a62"/><path d="M40 1c10 2 15 9 14 22l-10 3c4-8 1-17-4-25z" fill="#748671"/><path d="M50 5c5 4 6 12 3 18l-3-8z" fill="#b48b66"/><path d="M24 8c0-5 14-5 21 0 3 3 4 6 1 6-5 1-8 0-12-1-5 0-10-2-10-5z" fill="#c9e4fb"/><path d="M24 11c5 6 15 4 23 4" fill="none" stroke="#e9b68c" stroke-width="2"/><path d="M17 23c1-6 8-6 11-3-3 4-7 5-11 3z" fill="#c9e4fb"/><path d="M31 17c5-2 11 1 12 7-6-1-11 0-15 2 3-4 4-6 3-9z" fill="#5f3a25"/><path d="M13 28c10-3 26-5 37-1 1 2-4 5-9 6H28z" fill="#86b892"/><path d="M14 31c8-4 20-1 28 0" fill="none" stroke="#f3d7aa" stroke-width="2"/></svg>
      </label>
      <button class="w-[55px] flex justify-center" aria-label="Copilot preview">
        <span class="relative size-[29px]">
          <svg class="w-[29px] h-[25px]" viewBox="0 0 29 25"><defs><linearGradient id="tc1" x1="0" y1="0" x2="0" y2="1"><stop offset="0" stop-color="#1c8bf0"/><stop offset=".6" stop-color="#48b95e"/><stop offset="1" stop-color="#f3c81d"/></linearGradient><linearGradient id="tc2" x1="1" y1="0" x2="0" y2="1"><stop offset="0" stop-color="#a94df5"/><stop offset=".6" stop-color="#f45a9a"/><stop offset="1" stop-color="#fb8a4b"/></linearGradient></defs><path d="M9 0h8c3 0 4 2 5 7h-6l-4 12H4c-3 0-4-2-3.500-5L4 4c.8-2.700 2-4 5-4z" fill="url(#tc1)"/><path d="M13 0h6c2 0 3 3 3.500 7H17z" fill="#1746cf"/><path d="M17 7h8c3 0 4.500 2 3.500 5l-3 9c-1 3-3 4-6 4h-8z" fill="url(#tc2)"/></svg>
          <span class="absolute left-[7px] bottom-0 px-[3px] h-[9px] rounded-[2px] bg-[#ffc800] text-black text-[8px] leading-[9px] font-bold">PRE</span>
        </span>
      </button>
      <button class="w-[55px] flex justify-center" aria-label="Task view"><svg class="w-[30px] h-7" viewBox="0 0 30 28"><rect y="7" width="22" height="20" rx="1" fill="#636261"/><rect x="7" width="23" height="20" rx="1" fill="#f1f0f0"/><path d="M7 7h15v13H7z" fill="#b4b3b3"/></svg></button>
      <button class="w-[55px] flex justify-center" aria-label="Chat"><svg class="size-7" viewBox="0 0 28 28"><path d="M14 0a14 14 0 1 1-6 26.700L1 27.500 2 21A14 14 0 0 1 14 0z" fill="#6a5fd0"/><path d="M14 0a14 14 0 0 1 13 9C20 5 9 5 1.500 9A14 14 0 0 1 14 0z" fill="#8d7fe0"/><rect x="6" y="8" width="11.500" height="12" rx="2.500" fill="#fff"/><path d="m18.500 12 3.500-2.500v9L18.500 16z" fill="#fff"/></svg></button>
      <button class="relative w-[55px] h-[50px] flex justify-center items-center" aria-label="Edge">
        <span class="absolute inset-x-[3px] inset-y-0 rounded-[5px] bg-[#393835] border border-[#44423f]"></span>
        <svg class="relative size-[30px]" viewBox="0 0 30 30"><defs><linearGradient id="ed" x1="0" y1="0" x2="1" y2=".6"><stop offset="0" stop-color="#31b7e8"/><stop offset="1" stop-color="#66e256"/></linearGradient></defs><path d="M0 14C1 5 7 0 15 0c9 0 15 6 15 13 0 5-4 8-8 8-3 0-5-1-5-2.500 0-1 1.300-1.700 1.300-3.700C18.300 12 16 9 12 8 7 7.500 2 9 0 14z" fill="url(#ed)"/><path d="M0 14c1.500-4 6-6.500 11-6.500 4.500 0 7.300 3.500 7.300 6.500-2-1.500-8-.5-7.300 5 .6 5.500 7 9 13.500 6.500C22 28.500 18 30 15 30 6 30-.5 23 0 14z" fill="#1276cd"/><path d="M11 12.500C6 16 5 24 12 29.700c6 1 11-1.200 14.500-5.700-5 3-12 2-14.500-2-2-3-1.500-6.500 1-9z" fill="#0d4fa0"/></svg>
        <span class="absolute bottom-[2px] w-5 h-1 rounded-full bg-[#ff5aa5]"></span>
      </button>
      <button class="relative w-[55px] h-[50px] flex justify-center items-center" aria-label="File Explorer">
        <svg class="w-[30px] h-[27px]" viewBox="0 0 30 27"><path d="M0 2c0-1.200.8-2 2-2h8l3 3.500h15c1.200 0 2 .8 2 2V15H0z" fill="#dc9607"/><path d="M0 6h10.500L13 3.800h15c1.200 0 2 .8 2 2V27H0z" fill="#fcce3c"/><path d="M5 22c0-2 1-3.500 3-3.500h14c2 0 3 1.500 3 3.500v5H5z" fill="#1177c6"/><path d="M10 23h10" stroke="#0b4f8d" stroke-width="1.800" stroke-linecap="round"/></svg>
        <span class="absolute bottom-[2px] w-2 h-1 rounded-full bg-[#9b9997]"></span>
      </button>
      <button class="w-[55px] flex justify-center" aria-label="Store"><svg class="size-[29px]" viewBox="0 0 29 29"><path d="M7.500 7V2c0-.8.400-1.200 1.200-1.200h11.600c.8 0 1.200.4 1.200 1.200v5" fill="none" stroke="#30a9e6" stroke-width="1.800"/><path d="M0 5.500h29V25c0 2.500-1.500 4-4 4H4c-2.500 0-4-1.500-4-4z" fill="#f1f1f1"/><path d="M8.500 11h5.500v5.500H8.500z" fill="#f25022"/><path d="M15 11h5.500v5.500H15z" fill="#7fba00"/><path d="M8.500 17.500h5.500V23H8.500z" fill="#00a4ef"/><path d="M15 17.500h5.500V23H15z" fill="#ffb900"/></svg></button>
      <button class="w-[55px] flex justify-center" aria-label="McAfee"><svg class="w-[27px] h-[30px]" viewBox="0 0 27 30"><path d="m0 0 13.500 6.500L27 0v22.500L13.500 30 0 22.500zM5.500 8.500v11l8 4.500 8-4.500v-11l-8 4z" fill="#c8252c" fill-rule="evenodd"/></svg></button>
      <button class="relative w-[55px] flex justify-center" aria-label="Help">
        <svg class="size-[30px]" viewBox="0 0 30 30"><circle cx="15" cy="15" r="14" fill="#1795d6" stroke="#f2f8fc" stroke-width="1.800"/><path d="M10 11c0-3.500 2.500-5 5-5s5 1.500 5 4.500c0 3.500-4.500 4-4.500 8" fill="none" stroke="#fff" stroke-width="3.200"/><circle cx="15.500" cy="23" r="2.100" fill="#fff"/></svg>
        <span class="absolute right-[6px] -top-[7px] size-5 rounded-full bg-[#ffb900]"></span>
      </button>
      <button class="relative w-[55px] h-[50px] flex justify-center items-center" aria-label="Photos">
        <span class="absolute left-[3px] right-[2px] inset-y-0 rounded-[5px] bg-[#4b2627] border-r-4 border-[#3f2424]"></span>
        <svg class="relative size-[26px]" viewBox="0 0 26 26"><defs><linearGradient id="ph" x1="0" y1="1" x2="1" y2="0"><stop offset="0" stop-color="#1668d4"/><stop offset="1" stop-color="#5a50b0"/></linearGradient></defs><rect width="26" height="26" rx="3" fill="url(#ph)"/><path d="M0 21 9.500 9.500c1-1.200 2-1.200 3 0L24 24c-.5 1.300-1.500 2-3 2H3c-2 0-3-1-3-3z" fill="#3fb5f5"/><path d="m11 22 4-4.500L22 26H8z" fill="#0e4fb0"/><circle cx="19" cy="5.500" r="2.300" fill="#fff"/></svg>
        <span class="absolute bottom-[2px] w-2 h-1 rounded-full bg-[#ff9aa5]"></span>
      </button>
    </div>

    <div class="flex items-center justify-end pr-[22px]">
      <button class="w-10 flex justify-center" aria-label="Show hidden icons"><svg class="w-[14px] h-2" viewBox="0 0 14 8" fill="none" stroke="#f2f0ee" stroke-width="1.600"><path d="m1 7 6-6 6 6"/></svg></button>
      <button class="w-10 flex justify-center" aria-label="OneDrive"><svg class="w-5 h-[14px]" viewBox="0 0 20 14"><path d="M4 6C5 2.500 7.500 0 11 0c3.500 0 6 2.500 6.500 6 1.500.5 2.500 2 2.500 3.800C20 12.200 18.500 14 16 14H4c-2.500 0-4-1.800-4-4 0-2.300 1.700-4 4-4z" fill="#a9a8a8"/><path d="m7 13 10.500-7c1.500.5 2.500 2 2.500 3.800C20 12.200 18.500 14 16 14H4c-1.500 0-3-1-3.600-2.500L5 8z" fill="#f4f4f4"/></svg></button>
      <div class="w-14 text-center"><p>ENG</p><p>US</p></div>
      <button class="ml-2 flex items-center gap-[10px]" aria-label="Network, volume, battery">
        <svg class="w-5 h-4" viewBox="0 0 20 16" fill="none" stroke="#f2f0ee" stroke-width="1.500" stroke-linecap="round"><path d="M1 6c5-5.500 13-5.500 18 0M4 9c3.500-3.800 8.500-3.800 12 0M7 12c1.800-1.900 4.200-1.900 6 0"/><circle cx="10" cy="14" r="1.300" fill="#f2f0ee" stroke="none"/></svg>
        <svg class="w-[21px] h-4" viewBox="0 0 21 16" fill="none" stroke="#f2f0ee" stroke-width="1.500" stroke-linecap="round" stroke-linejoin="round"><path d="M1 5.500h3.500L9 1.500v13l-4.500-4H1zM12 5.500c1.200 1.500 1.200 3.500 0 5M14.700 3.500c2.300 2.700 2.300 6.300 0 9M17.400 1.500c3.500 4 3.500 9 0 13"/></svg>
        <svg class="w-5 h-[14px]" viewBox="0 0 20 14" fill="none" stroke="#f2f0ee" stroke-width="1.500"><rect x=".8" y=".8" width="15.500" height="12.400" rx="3"/><path d="M4 4v6" stroke-width="2.500"/><path d="M18.500 4.500v5" stroke-width="2"/></svg>
      </button>
      <div class="w-24 text-right"><p>12:07 pm</p><p>04/02/2024</p></div>
      <button class="ml-3" aria-label="Notifications"><svg class="w-[18px] h-5" viewBox="0 0 18 20" fill="none" stroke="#f2f0ee" stroke-width="1.500" stroke-linejoin="round"><path d="M9 2C5.500 2 3.300 4.500 3.300 7.800V12L1 16h15l-1.500-3M6.500 16.500c.5 3 4.500 3 5 0M7.500 6.500h4l-4 5.500h4M13 1h4l-4 5.500h4"/></svg></button>
    </div>
  </div>

</body>
</html>
